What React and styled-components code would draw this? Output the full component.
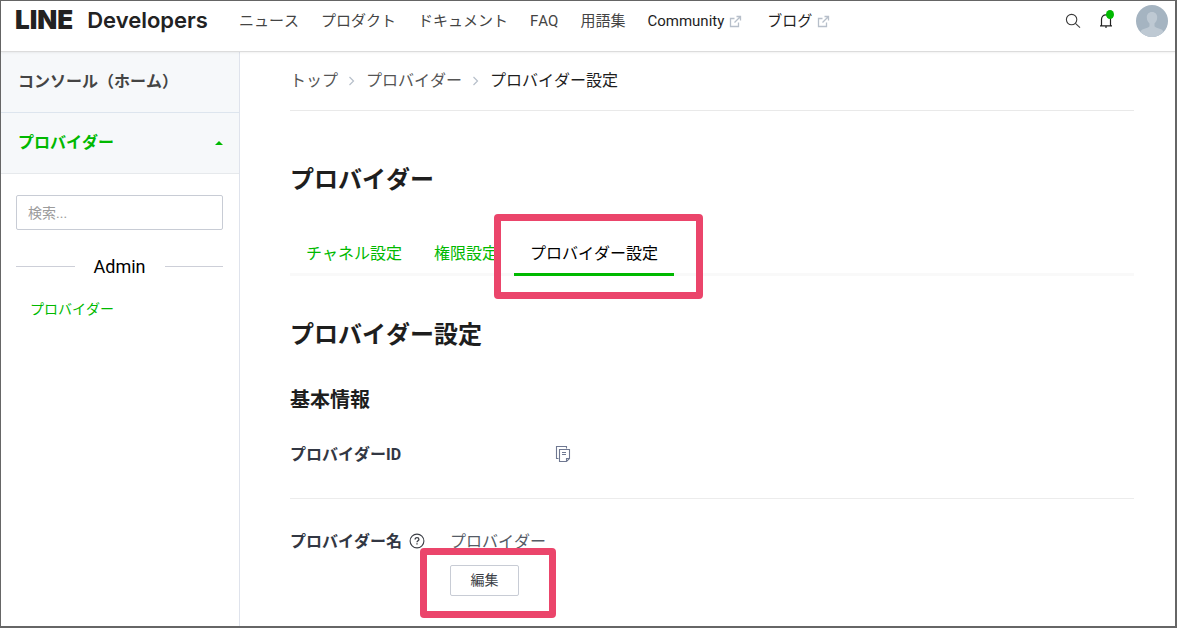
import React from "react";
import styled, { createGlobalStyle, css } from "styled-components";

const GlobalStyle = createGlobalStyle`
  *, *::before, *::after { box-sizing: border-box; }
  body {
    margin: 0;
    background: #fff;
    color: #1e1e1e;
    font-family: Roboto, "Noto Sans CJK JP", sans-serif;
    font-size: 16px;
    font-kerning: none;
    line-height: 24px;
  }
  a { color: inherit; text-decoration: none; }
  h1, h2, h3, dl, dd, ol, ul { margin: 0; padding: 0; list-style: none; }
  button, input { font: inherit; font-kerning: none; }
`;

const Shell = styled.div`
  min-height: 100vh;
  display: flex;
  flex-direction: column;
  border: solid #666;
  border-width: 1px 2px 2px 1px;
`;

const Header = styled.header`
  display: flex;
  align-items: flex-start;
  height: 51px;
  padding: 0 7px 0 14px;
  border-bottom: 1px solid #dcdcdc;
  box-shadow: 0 1px 2px rgba(0, 0, 0, 0.06);
  position: relative;
`;

const Logo = styled.a`
  display: flex;
  align-items: center;
  gap: 14px;
  width: 224px;
  font-family: Inter, sans-serif;
  font-kerning: normal;
  line-height: 38px;
  color: #222;
`;

const LogoMark = styled.span`
  font-size: 26px;
  font-weight: 900;
`;

const LogoName = styled.span`
  font-size: 22px;
  font-weight: 600;
`;

const Nav = styled.nav`
  display: flex;
  flex: 1;
  gap: 22px;
  font-size: 15px;
  line-height: 40px;
  white-space: nowrap;
`;

const NavLink = styled.a`
  display: flex;
  align-items: center;
  gap: 5px;
  margin-right: ${(p) => (p.$external ? "3px" : 0)};
  color: ${(p) => (p.$external ? "#1e1e1e" : "#444")};
`;

const Tools = styled.div`
  display: flex;
  align-items: center;
  height: 40px;
`;

const IconButton = styled.button`
  display: flex;
  position: relative;
  padding: 0;
  border: 0;
  background: none;
  color: #3c3c3c;
  cursor: pointer;
  margin-right: ${(p) => p.$space || 0}px;
`;

const Dot = styled.span`
  position: absolute;
  top: -2px;
  right: 0;
  width: 8px;
  height: 9px;
  border-radius: 50%;
  background: #00b900;
`;

const Body = styled.div`
  display: flex;
  flex: 1;
`;

const Sidebar = styled.aside`
  flex: 0 0 239px;
  border-right: 1px solid #dfe3ec;
`;

const SideItem = styled.a`
  display: flex;
  align-items: center;
  justify-content: space-between;
  height: 61px;
  padding: 0 16px 0 17px;
  border-bottom: 1px solid ${(p) => (p.$active ? "#e6e9ec" : "#dde5ee")};
  background: #f6f8fa;
  font-weight: 700;
  color: ${(p) => (p.$active ? "#00b900" : "#444")};
`;

const SideBody = styled.div`
  padding: 21px 16px 0 15px;
`;

const Search = styled.input`
  display: block;
  width: 100%;
  height: 35px;
  padding: 0 11px;
  border: 1px solid #c8ccd5;
  border-radius: 2px;
  background: #fff;
  font-size: 14px;
  &::placeholder { color: #9b9b9b; opacity: 1; }
`;

const Divider = styled.h2`
  display: flex;
  align-items: center;
  gap: 19px;
  margin: 24px 0 20px;
  font-size: 18px;
  line-height: 25px;
  font-weight: 400;
  color: #000;
  &::before, &::after {
    content: "";
    flex: 1;
    height: 1px;
    background: #cdcfd8;
  }
`;

const SideLink = styled.a`
  display: block;
  padding-left: 14px;
  font-size: 14px;
  line-height: 20px;
  color: #00b900;
`;

const Main = styled.main`
  flex: 1;
  min-width: 0;
  padding: 0 41px 0 50px;
`;

const Crumbs = styled.ol`
  display: flex;
  align-items: center;
  height: 59px;
  border-bottom: 1px solid #e9e9e9;
`;

const Crumb = styled.li`
  display: flex;
  align-items: center;
  color: ${(p) => (p.$current ? "#1e1e1e" : "#555")};
  svg { margin: 0 11px 0 10px; }
`;

const Title = styled.h1`
  margin-top: 51px;
  font-size: 24px;
  line-height: 36px;
`;

const Tabs = styled.div`
  display: flex;
  height: 44px;
  margin-top: 34px;
  box-shadow: inset 0 -3px #f9f9f9;
`;

const TabSlot = styled.div`
  position: relative;
  display: flex;
`;

const Tab = styled.button`
  padding: 3px 16px 0;
  border: 0;
  border-bottom: 3px solid transparent;
  background: none;
  line-height: 38px;
  white-space: nowrap;
  color: #00b900;
  cursor: pointer;
  ${(p) =>
    p.$selected &&
    css`
      color: #000;
      border-bottom-color: #00b900;
    `}
`;

const Highlight = styled.span`
  position: absolute;
  inset: ${(p) => p.$inset};
  border: 7px solid #eb456b;
  border-radius: 4px;
  pointer-events: none;
`;

const SectionTitle = styled.h2`
  margin-top: 41px;
  font-size: 24px;
  line-height: 36px;
`;

const GroupTitle = styled.h3`
  margin-top: 32px;
  font-size: 20px;
  line-height: 30px;
`;

const Row = styled.div`
  display: grid;
  grid-template-columns: 160px 1fr;
  padding: ${(p) => p.$pad};
  border-bottom: ${(p) => (p.$last ? 0 : "1px solid #ececec")};
`;

const Term = styled.dt`
  display: flex;
  align-items: center;
  gap: 7px;
  height: 24px;
  white-space: nowrap;
  font-weight: 700;
  color: #323743;
  svg { margin-bottom: 2px; }
`;

const Value = styled.dd`
  color: #555b66;
`;

const CopySlot = styled.div`
  display: flex;
  align-items: center;
  height: 22px;
  padding-left: 105px;
`;

const ActionSlot = styled.div`
  position: relative;
  width: 69px;
  margin-top: 11px;
`;

const EditButton = styled.button`
  display: block;
  width: 100%;
  height: 31px;
  padding: 0 0 2px;
  border: 1px solid #c8ccd5;
  border-radius: 2px;
  background: #fff;
  font-size: 14px;
  line-height: 26px;
  color: #3c3f46;
  cursor: pointer;
`;

const ExternalIcon = () => (
  <svg width="13" height="13" viewBox="0 0 13 13" fill="none" stroke="#b7bfca" strokeWidth="1.3">
    <path d="M5.500 3.500H1.500v8h8V7.500M7.500 1.500h4v4M11.500 1.500L5.500 7.500" />
  </svg>
);

const SearchIcon = () => (
  <svg width="16" height="16" viewBox="0 0 16 16" fill="none" stroke="currentColor" strokeWidth="1.1">
    <circle cx="6.600" cy="6.600" r="5.200" />
    <path d="M10.400 10.400l4.600 4.300" />
  </svg>
);

const BellIcon = () => (
  <svg width="17" height="18" viewBox="0 0 17 18" fill="none" stroke="#222" strokeWidth="1.2">
    <path d="M4.500 13.500V7.500C4.500 4.600 6.300 2.800 9 2.800s4.500 1.800 4.500 4.700v6M3 13.900h12M9 14v2" />
  </svg>
);

const Avatar = () => (
  <svg width="32" height="32" viewBox="0 0 32 32">
    <defs>
      <clipPath id="avatarClip">
        <circle cx="16" cy="16" r="16" />
      </clipPath>
    </defs>
    <g clipPath="url(#avatarClip)">
      <rect width="32" height="32" fill="#a5b4c1" />
      <path
        d="M16 7c-3.400 0-5.300 2.400-5.200 5.500.1 2.700 1.200 4.600 2.700 6v2c0 1-.5 1.500-1.500 1.900L7 24.300c-1.600.7-2.300 1.800-2.500 3.200V32h23v-4.500c-.2-1.400-.9-2.500-2.500-3.200l-5-1.900c-1-.4-1.500-.9-1.500-1.900v-2c1.500-1.400 2.600-3.300 2.700-6C21.300 9.400 19.400 7 16 7z"
        fill="#bec9d3"
      />
    </g>
  </svg>
);

const CaretUp = () => (
  <svg width="8" height="4" viewBox="0 0 8 4">
    <path d="M0 4L4 0l4 4z" fill="#00b900" />
  </svg>
);

const Chevron = () => (
  <svg width="7" height="10" viewBox="0 0 7 10" fill="none" stroke="#b7bfca" strokeWidth="1.2">
    <path d="M1.500 1L5.500 5l-4 4" />
  </svg>
);

const CopyIcon = () => (
  <svg width="16" height="17" viewBox="0 0 16 17" fill="none" stroke="#6f7891" strokeWidth="1.1">
    <path d="M3.500 12.500h-2v-12h10v2" />
    <path d="M4.500 3.500h10v9l-3 3h-7zM11.500 15.500v-3h3M7 6.500h4M7 8.500h4" />
  </svg>
);

const HelpIcon = () => (
  <svg width="16" height="16" viewBox="0 0 16 16" fill="none" stroke="#3c3f46" strokeWidth="1.1">
    <circle cx="8" cy="8" r="6.900" />
    <path d="M6.100 6.600c0-1.200.8-1.900 1.900-1.900s1.900.7 1.900 1.700c0 1.300-1.900 1.400-1.900 2.900M8 10.300v1.200" strokeWidth="1.3" />
  </svg>
);

const navItems = [
  { label: "ニュース" },
  { label: "プロダクト" },
  { label: "ドキュメント" },
  { label: "FAQ" },
  { label: "用語集" },
  { label: "Community", external: true },
  { label: "ブログ", external: true },
];

export default function App() {
  return (
    <>
      <GlobalStyle />
      <Shell>
        <Header>
          <Logo href="#">
            <LogoMark>LINE</LogoMark>
            <LogoName>Developers</LogoName>
          </Logo>
          <Nav>
            {navItems.map((item) => (
              <NavLink key={item.label} href="#" $external={item.external}>
                {item.label}
                {item.external && <ExternalIcon />}
              </NavLink>
            ))}
          </Nav>
          <Tools>
            <IconButton aria-label="検索" $space={16}>
              <SearchIcon />
            </IconButton>
            <IconButton aria-label="通知" $space={22}>
              <BellIcon />
              <Dot />
            </IconButton>
            <IconButton aria-label="アカウント">
              <Avatar />
            </IconButton>
          </Tools>
        </Header>
        <Body>
          <Sidebar>
            <SideItem href="#">コンソール（ホーム）</SideItem>
            <SideItem href="#" $active>
              プロバイダー
              <CaretUp />
            </SideItem>
            <SideBody>
              <Search type="search" aria-label="検索" placeholder="検索..." />
              <Divider>Admin</Divider>
              <SideLink href="#">プロバイダー</SideLink>
            </SideBody>
          </Sidebar>
          <Main>
            <Crumbs>
              <Crumb>
                <a href="#">トップ</a>
                <Chevron />
              </Crumb>
              <Crumb>
                <a href="#">プロバイダー</a>
                <Chevron />
              </Crumb>
              <Crumb $current>プロバイダー設定</Crumb>
            </Crumbs>
            <Title>プロバイダー</Title>
            <Tabs role="tablist">
              <Tab role="tab">チャネル設定</Tab>
              <Tab role="tab">権限設定</Tab>
              <TabSlot>
                <Tab role="tab" aria-selected="true" $selected>
                  プロバイダー設定
                </Tab>
                <Highlight $inset="-18px -29px -23px -20px" />
              </TabSlot>
            </Tabs>
            <SectionTitle>プロバイダー設定</SectionTitle>
            <GroupTitle>基本情報</GroupTitle>
            <dl>
              <Row $pad="28px 0 31px">
                <Term>プロバイダーID</Term>
                <Value>
                  <CopySlot>
                    <IconButton aria-label="コピー">
                      <CopyIcon />
                    </IconButton>
                  </CopySlot>
                </Value>
              </Row>
              <Row $pad="31px 0 0" $last>
                <Term>
                  プロバイダー名
                  <HelpIcon />
                </Term>
                <Value>
                  プロバイダー
                  <ActionSlot>
                    <EditButton>編集</EditButton>
                    <Highlight $inset="-17px -37px -22px -30px" />
                  </ActionSlot>
                </Value>
              </Row>
            </dl>
          </Main>
        </Body>
      </Shell>
    </>
  );
}
